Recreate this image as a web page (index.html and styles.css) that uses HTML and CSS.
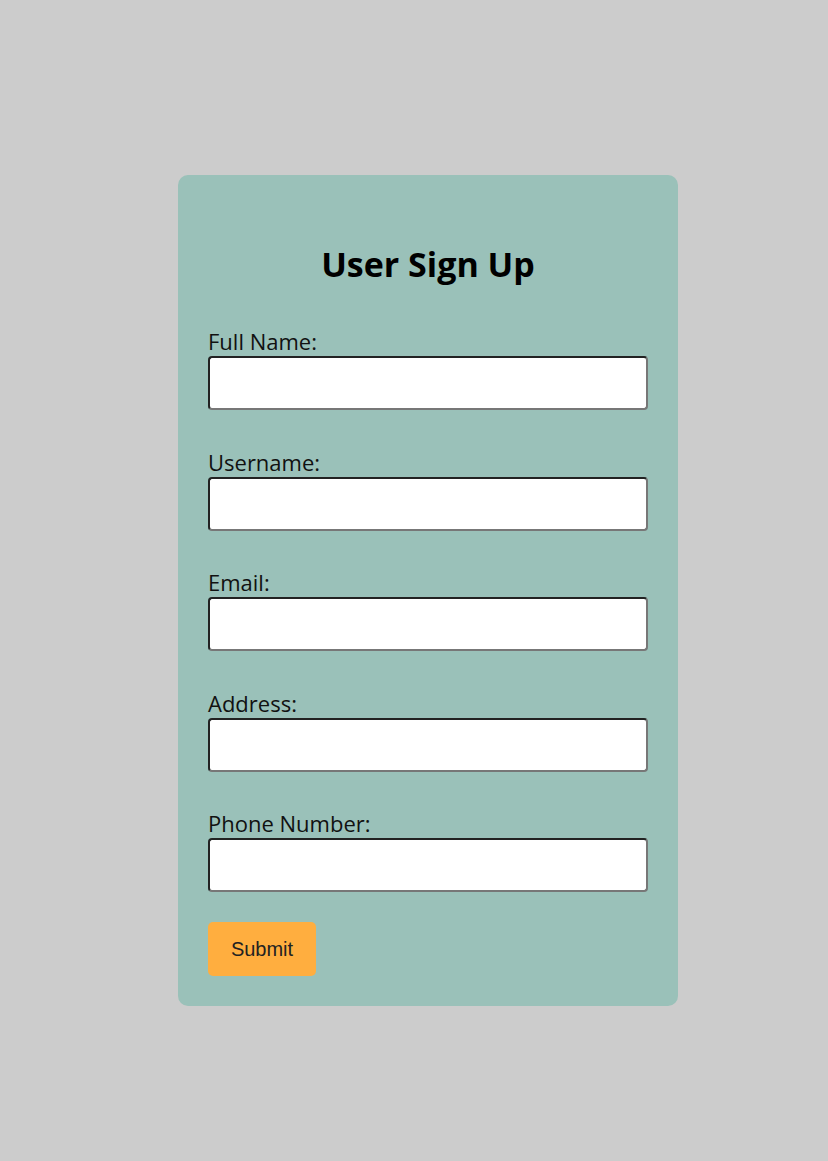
FILE: index.html
```html
<!DOCTYPE html>
<html lang="en">
<head>
<meta charset="utf-8">
<title>User Sign Up</title>
<link rel="stylesheet" href="styles.css">
</head>
<body>
<form class="card">
  <h2 class="title">User Sign Up</h2>
  <div class="field">
    <label class="label" for="fullname">Full Name:</label>
    <input class="input" id="fullname" type="text">
  </div>
  <div class="field">
    <label class="label" for="username">Username:</label>
    <input class="input" id="username" type="text">
  </div>
  <div class="field">
    <label class="label" for="email">Email:</label>
    <input class="input" id="email" type="email">
  </div>
  <div class="field">
    <label class="label" for="address">Address:</label>
    <input class="input" id="address" type="text">
  </div>
  <div class="field">
    <label class="label" for="phone">Phone Number:</label>
    <input class="input" id="phone" type="tel">
  </div>
  <button class="submit" type="button">Submit</button>
</form>
</body>
</html>
```

FILE: styles.css
```css
html, body {
  margin: 0;
  padding: 0;
}
body {
  background: #cccccc;
  min-height: 1161px;
  box-sizing: border-box;
  padding: 175px 0 0 178px;
  font-family: "Open Sans", "Noto Sans", sans-serif;
  color: #111;
}
.card {
  width: 500px;
  box-sizing: border-box;
  padding: 30px 30px 30px 30px;
  background: #9ac1b9;
  border-radius: 10px;
  display: flex;
  flex-direction: column;
  align-items: flex-start;
}
.title {
  align-self: stretch;
  text-align: center;
  margin: 37px 0 40px 0;
  font-size: 34px;
  line-height: 45px;
  font-weight: 700;
  color: #000;
}
.field {
  display: flex;
  flex-direction: column;
  align-self: stretch;
  margin-bottom: 37.5px;
}
.field:nth-last-of-type(1) {
  margin-bottom: 30px;
}
.label {
  font-size: 22px;
  line-height: 29px;
}
.input {
  width: 440px;
  height: 54px;
  box-sizing: border-box;
  margin: 0;
  padding: 4px 8px;
  border: 2px solid;
  border-color: #222 #777 #777 #222;
  border-radius: 4px;
  background: #fff;
  font-size: 18px;
}
.submit {
  width: 108px;
  height: 54px;
  border: none;
  border-radius: 5px;
  background: #ffae3f;
  color: #222;
  font-family: "Liberation Sans", Arial, sans-serif;
  font-size: 20px;
  padding: 0;
}
```
